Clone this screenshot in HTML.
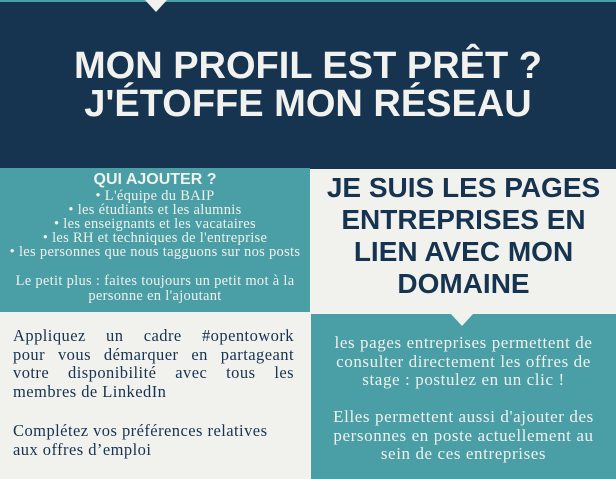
<!DOCTYPE html>
<html><head><meta charset="utf-8"><style>
*{margin:0;padding:0;box-sizing:border-box}
body{width:616px;height:479px;overflow:hidden;position:relative;background:#f1f1ee;font-family:"Liberation Serif",serif}
.abs{position:absolute}
.sans{font-family:"Liberation Sans",sans-serif;font-weight:bold}
#top{left:0;top:0;width:616px;height:169px;background:#163450}
#topline{left:0;top:0;width:616px;height:2px;background:#4a9ea5}
#notch{left:145px;top:0;width:0;height:0;border-left:11px solid transparent;border-right:11px solid transparent;border-top:12px solid #f1f1ee}
.title{color:#f1f1ee;font-size:38px;line-height:40px;text-align:center;width:616px;left:0}
#lt{left:0;top:168px;width:310px;height:144px;background:#4a9ea5;color:#f1f1ee;text-align:center}
#rb{left:311px;top:314px;width:305px;height:165px;background:#4a9ea5}
#rnotch{left:451px;top:314px;border-left:11px solid transparent;border-right:11px solid transparent;border-top:12px solid #f1f1ee;width:0;height:0}
.h2{color:#163450;font-size:28px;line-height:32px;text-align:center}
.t{font-size:16.5px;line-height:18.5px;letter-spacing:0.45px}
.j{display:block;text-align:justify;text-align-last:justify;white-space:nowrap}
</style></head><body>
<div id="top" class="abs"></div>
<div id="topline" class="abs"></div>
<div id="notch" class="abs"></div>
<div class="abs title sans" style="top:46px">MON PROFIL EST PRÊT ?</div>
<div class="abs title sans" style="top:84px">J'ÉTOFFE MON RÉSEAU</div>

<div id="lt" class="abs">
 <div class="sans" style="font-size:16px;line-height:18px;margin-top:3px">QUI AJOUTER ?</div>
 <div style="font-size:14.5px;line-height:14px;letter-spacing:0.3px;white-space:nowrap">• L'équipe du BAIP<br>• les étudiants et les alumnis<br>• les enseignants et les vacataires<br>• les RH et techniques de l'entreprise<br>• les personnes que nous tagguons sur nos posts</div>
 <div style="font-size:14.5px;line-height:15px;letter-spacing:0.3px;margin-top:15px;white-space:nowrap">Le petit plus : faites toujours un petit mot à la<br>personne en l'ajoutant</div>
</div>

<div class="abs h2 sans" style="left:311px;top:172px;width:305px">JE SUIS LES PAGES<br>ENTREPRISES EN<br>LIEN AVEC MON<br>DOMAINE</div>

<div class="abs t" style="left:13px;top:327px;width:281px;color:#163450">
<span class="j">Appliquez un cadre #opentowork</span>
<span class="j">pour vous démarquer en partageant</span>
<span class="j">votre disponibilité avec tous les</span>
<span style="display:block">membres de LinkedIn</span></div>
<div class="abs t" style="left:13px;top:422px;width:295px;color:#163450;white-space:nowrap">Complétez vos préférences relatives<br>aux offres d’emploi</div>

<div id="rb" class="abs"></div>
<div id="rnotch" class="abs"></div>
<div class="abs t" style="left:311px;top:334px;width:305px;color:#f1f1ee;text-align:center;white-space:nowrap;font-size:17px;letter-spacing:0.6px">les pages entreprises permettent de<br>consulter directement les offres de<br>stage : postulez en un clic !<br><br>Elles permettent aussi d'ajouter des<br>personnes en poste actuellement au<br>sein de ces entreprises</div>
</body></html>
